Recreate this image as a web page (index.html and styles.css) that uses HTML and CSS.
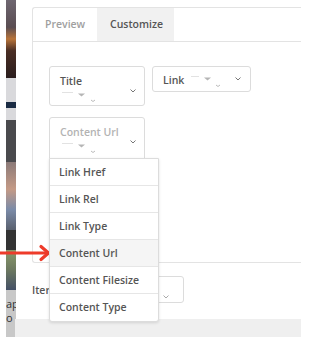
FILE: index.html
```html
<!DOCTYPE html>
<html lang="en">

<head>
    <meta charset="UTF-8">
    <meta name="viewport" content="width=device-width, initial-scale=1.0">
    <title>Customize</title>
    <link rel="stylesheet" href="styles.css">
</head>

<body>
    <div class="strip">
        <div class="photo sunset"></div>
        <div class="photo pale"><span class="mark"></span></div>
        <div class="photo dark"></div>
        <div class="photo person"></div>
        <div class="photo dark2"></div>
        <div class="photo green"></div>
        <div class="photo caption"><span>aph</span><span>o</span></div>
    </div>

    <div class="main">
        <div class="panel">
            <div class="tabs">
                <div class="tab">Preview</div>
                <div class="tab active">Customize</div>
            </div>
            <div class="panel-body">
                <div class="row">
                    <div class="select tall">
                        <div class="label">Title</div>
                        <svg class="mini" width="34" height="11" viewBox="0 0 34 11"><path d="M0 0.5h11" stroke="#e2e2e2"/><path d="M16 1.5h7l-3.5 3z" fill="#b5b5b5"/><path d="M29 8l2 1.5 2-1.5" stroke="#bbb" fill="none"/></svg>
                        <svg class="chev" width="6" height="4" viewBox="0 0 6 4"><path d="M0.5 0.5l2.5 2.5 2.5-2.5" stroke="#777" fill="none"/></svg>
                    </div>
                    <div class="select short">
                        <div class="label">Link</div>
                        <svg class="inline-mini" width="30" height="12" viewBox="0 0 30 12"><path d="M0 0.5h8" stroke="#e2e2e2"/><path d="M13 1.5h7l-3.5 3z" fill="#b5b5b5"/><path d="M25 9l2 1.5 2-1.5" stroke="#bbb" fill="none"/></svg>
                        <svg class="chev" width="6" height="4" viewBox="0 0 6 4"><path d="M0.5 0.5l2.5 2.5 2.5-2.5" stroke="#777" fill="none"/></svg>
                    </div>
                </div>
                <div class="row">
                    <div class="select tall open">
                        <div class="label placeholder">Content Url</div>
                        <svg class="mini" width="34" height="11" viewBox="0 0 34 11"><path d="M0 0.5h11" stroke="#e2e2e2"/><path d="M16 1.5h7l-3.5 3z" fill="#b5b5b5"/><path d="M29 8l2 1.5 2-1.5" stroke="#bbb" fill="none"/></svg>
                        <svg class="chev" width="6" height="4" viewBox="0 0 6 4"><path d="M0.5 0.5l2.5 2.5 2.5-2.5" stroke="#777" fill="none"/></svg>
                        <ul class="dropdown">
                            <li>Link Href</li>
                            <li>Link Rel</li>
                            <li>Link Type</li>
                            <li class="hover">Content Url</li>
                            <li>Content Filesize</li>
                            <li>Content Type</li>
                        </ul>
                    </div>
                </div>
            </div>
        </div>
        <div class="item-row">
            <span class="item-label">Iter</span>
            <div class="item-select">
                <span class="item-r">r</span>
                <svg class="chev" width="6" height="4" viewBox="0 0 6 4"><path d="M0.5 0.5l2.5 2.5 2.5-2.5" stroke="#aaa" fill="none"/></svg>
            </div>
        </div>
        <div class="footer"></div>
    </div>

    <svg class="arrow" width="52" height="18" viewBox="0 0 52 18">
        <path d="M0 9h47" stroke="#ee3b2a" stroke-width="3"/>
        <path d="M41 2.5l7.5 6.5-7.5 6.5" stroke="#ee3b2a" stroke-width="3.2" fill="none" stroke-linecap="round"/>
    </svg>
</body>

</html>
```

FILE: styles.css
```css
body {
    font-family: "Open Sans", Arial, sans-serif;
    margin: 0;
    padding: 0;
    width: 313px;
    height: 337px;
    overflow: hidden;
    display: flex;
    background-color: #fff;
    color: #555;
}

.strip {
    width: 10px;
    margin-left: 6px;
    display: flex;
    flex-direction: column;
    flex-shrink: 0;
}

.photo {
    width: 10px;
}

.sunset {
    height: 78px;
    background: linear-gradient(#6e6670 0%, #5a4d52 35%, #b8743a 50%, #4a2e24 65%, #2a1d1d 100%);
}

.pale {
    height: 42px;
    background-color: #d9d9dc;
    position: relative;
}

.pale .mark {
    position: absolute;
    left: 0;
    top: 24px;
    width: 10px;
    height: 6px;
    background-color: #1b2c44;
}

.dark {
    height: 42px;
    background-color: #4a4a4d;
}

.person {
    height: 68px;
    background: linear-gradient(#8b7a78, #c49a86 40%, #7b8ba8 70%, #59606e);
}

.dark2 {
    height: 20px;
    background-color: #333;
}

.green {
    height: 40px;
    background: linear-gradient(#8a9a6a, #6c7860 50%, #445066);
}

.caption {
    height: 47px;
    background-color: #c8c8c8;
    font-size: 11px;
    color: #333;
    display: flex;
    flex-direction: column;
    overflow: hidden;
    white-space: nowrap;
    padding-top: 7px;
    line-height: 14px;
    box-sizing: border-box;
}

.main {
    width: 269px;
    margin-left: 16px;
    display: flex;
    flex-direction: column;
}

.panel {
    margin-top: 7px;
    border-top: 1px solid #e3e3e3;
    border-left: 1px solid #e3e3e3;
    border-bottom: 1px solid #e3e3e3;
    border-radius: 3px 0 0 3px;
}

.tabs {
    display: flex;
    height: 33px;
    border-bottom: 1px solid #e3e3e3;
}

.tab {
    font-size: 10.5px;
    font-weight: 600;
    color: #a0a0a0;
    padding: 0 12px;
    line-height: 33px;
    width: 64px;
    box-sizing: border-box;
}

.tab.active {
    width: 77px;
    background-color: #f1f1f1;
    color: #555;
    padding-left: 13px;
}

.panel-body {
    height: 220px;
    padding: 24px 0 0 16px;
    box-sizing: border-box;
}

.row {
    display: flex;
    gap: 7px;
    margin-bottom: 11px;
}

.select {
    position: relative;
    border: 1px solid #dcdcdc;
    border-radius: 3px;
    box-sizing: border-box;
    padding: 7px 0 0 10px;
}

.select.tall {
    width: 96px;
    height: 40px;
}

.select.open {
    height: 42px;
    border-radius: 3px 3px 0 0;
}

.select.short {
    width: 99px;
    height: 26px;
    display: flex;
    align-items: flex-start;
    padding-top: 6px;
}

.label {
    font-size: 10.5px;
    font-weight: 600;
    line-height: 14px;
    color: #555;
}

.label.placeholder {
    color: #b3b3b3;
}

.mini {
    display: block;
    margin-top: 4px;
    margin-left: 2px;
}

.inline-mini {
    margin-left: 7px;
    margin-top: 3px;
}

.chev {
    position: absolute;
    right: 8px;
    top: 22px;
}

.select.short .chev {
    top: 10px;
    right: 9px;
}

.dropdown {
    position: absolute;
    left: -1px;
    top: 40px;
    width: 108px;
    margin: 0;
    padding: 0;
    list-style: none;
    background-color: #fff;
    border: 1px solid #dcdcdc;
    border-radius: 0 0 3px 3px;
    box-shadow: 0 1px 3px rgba(0, 0, 0, 0.12);
    z-index: 10;
}

.dropdown li {
    height: 27px;
    line-height: 26px;
    padding-left: 9px;
    font-size: 10.5px;
    font-weight: 600;
    color: #555;
    border-bottom: 1px solid #e6e6e6;
    box-sizing: border-box;
}

.dropdown li:last-child {
    border-bottom: none;
}

.dropdown li.hover {
    background-color: #f5f5f5;
}

.item-row {
    display: flex;
    align-items: center;
    height: 27px;
    margin-top: 13px;
}

.item-label {
    font-size: 10.5px;
    font-weight: 600;
    color: #555;
    width: 108px;
}

.item-select {
    position: relative;
    width: 44px;
    height: 27px;
    border: 1px solid #dcdcdc;
    border-radius: 3px;
    box-sizing: border-box;
}

.item-r {
    position: absolute;
    left: 4px;
    top: 4px;
    font-size: 9px;
    color: #aaa;
}

.item-select .chev {
    top: 18px;
    right: 14px;
}

.footer {
    margin-top: 16px;
    margin-left: -17px;
    height: 20px;
    background-color: #efefef;
}

.arrow {
    position: absolute;
    left: 0;
    top: 244px;
}
```
